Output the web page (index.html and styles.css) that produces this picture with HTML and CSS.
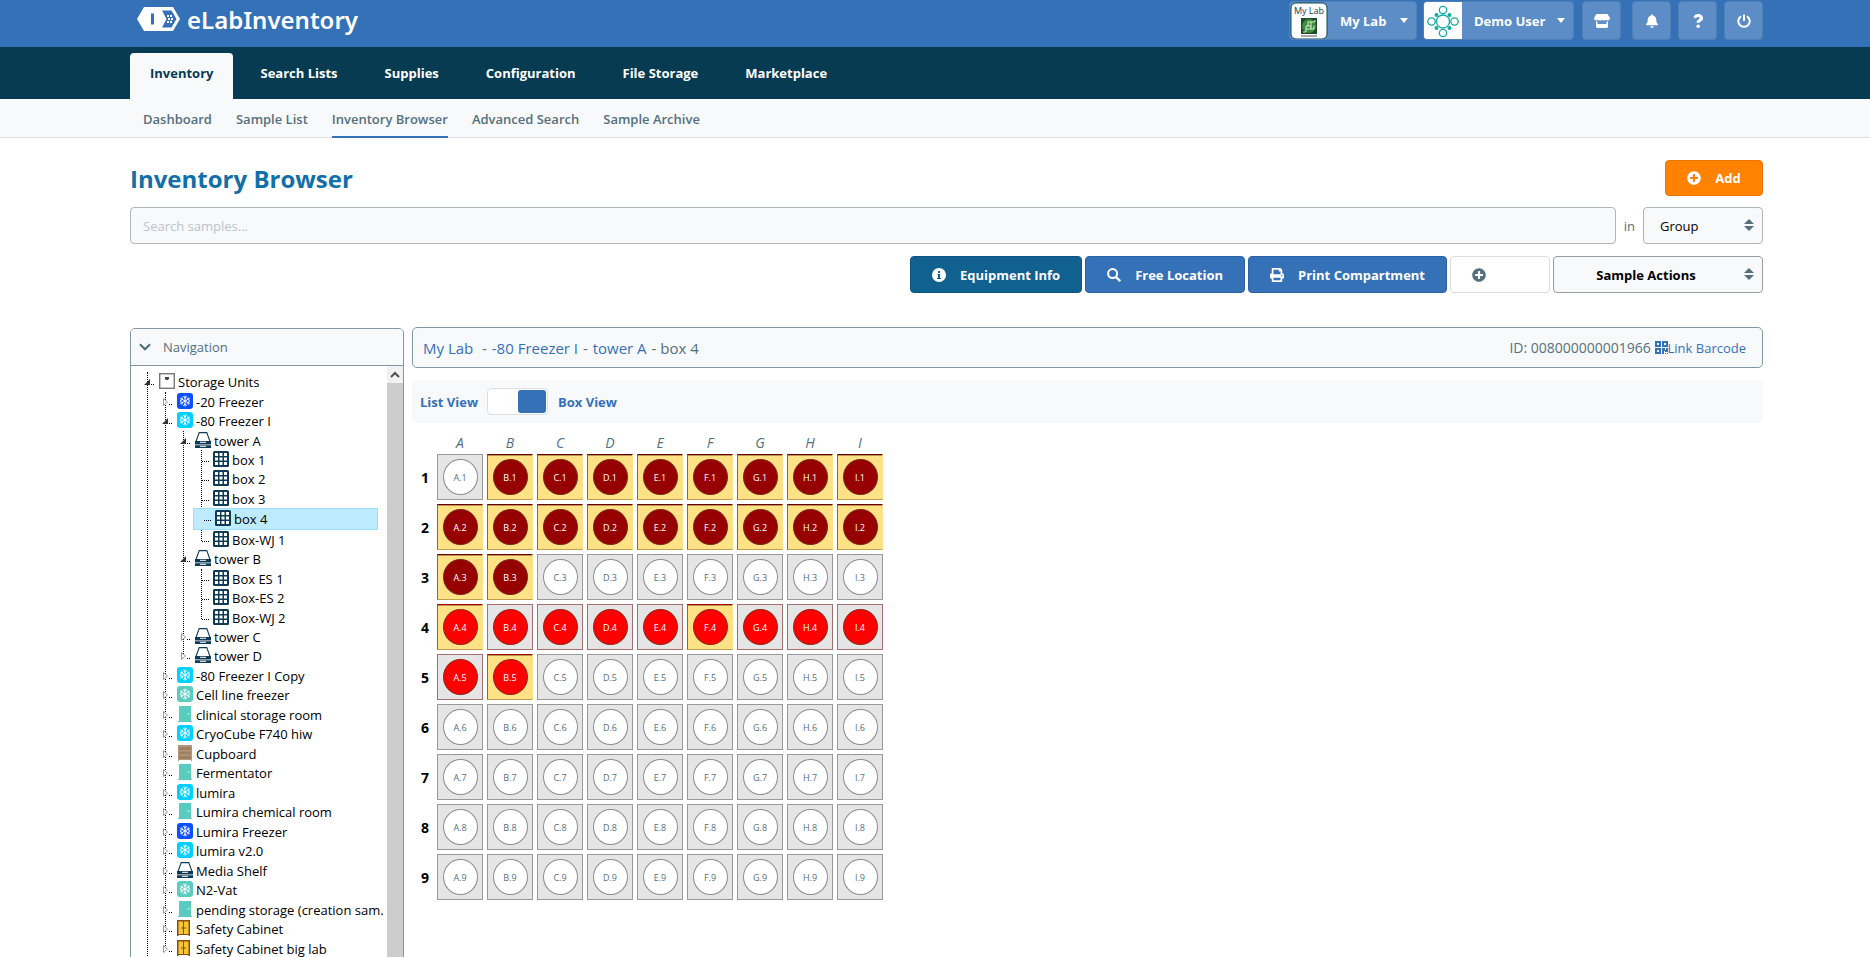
FILE: index.html
```html
<!DOCTYPE html>
<html lang="en">
<head>
  <meta charset="utf-8">
  <meta name="viewport" content="width=device-width, initial-scale=1">
  <title>eLabInventory - Inventory Browser</title>
  <link rel="stylesheet" href="styles.css">
</head>
<body>
<svg class="defs" aria-hidden="true">
  <symbol id="i-flake" viewBox="0 0 16 16"><rect width="16" height="16" rx="3"/><g stroke="#fff" stroke-width="1" fill="none" stroke-linecap="round"><path d="M8 3v10M3.7 5.5l8.6 5M3.7 10.5l8.6-5M6.5 3.6L8 5l1.5-1.4M6.5 12.4L8 11l1.5 1.4M3.4 7.3l2-.6-.5-2M12.6 8.7l-2 .6.5 2M3.4 8.7l2 .6-.5 2M12.6 7.3l-2-.6.5-2"/></g></symbol>
  <symbol id="i-unit" viewBox="0 0 16 16"><rect x=".7" y=".7" width="14.6" height="14.6" fill="#fff" stroke="#777" stroke-width="1.4"/><path d="M6 4h4v2l-1 1H7L6 6z" fill="#444"/></symbol>
  <symbol id="i-tower" viewBox="0 0 16 16"><path d="M4.200 .6h7.600L15 9.500H1z" fill="#fff" stroke="#0f3a55" stroke-width="1.1"/><path d="M0 9h16v3.500H0zM0 13.200h16V16H0z" fill="#0f3a55"/><path d="M5 10.300h6M5 14.300h6" stroke="#fff"/></symbol>
  <symbol id="i-box" viewBox="0 0 16 16"><rect width="16" height="16" rx="1.5" fill="#0f3a55"/><path d="M2 2h3v3H2zM6.500 2h3v3h-3zM11 2h3v3h-3zM2 6.500h3v3H2zM6.500 6.500h3v3h-3zM11 6.500h3v3h-3zM2 11h3v3H2zM6.500 11h3v3h-3zM11 11h3v3h-3z" fill="#fff"/></symbol>
  <symbol id="i-door" viewBox="0 0 16 16"><path d="M2 0h12v15h1v1H1v-1h1z" fill="#58cdbf"/><circle cx="11.500" cy="8" r=".8" fill="#e4fffb"/></symbol>
  <symbol id="i-cupboard" viewBox="0 0 16 16"><path d="M1 0h14v16h-1v-1H2v1H1z" fill="#b5967a"/><path d="M2 2h12v3H2zM2 6.500h12v3H2zM2 11h12v3H2z" fill="#a08062"/></symbol>
  <symbol id="i-cabinet" viewBox="0 0 16 16"><path d="M0 0h13v16h-1.500v-1h-10v1H0z" fill="#8a4a10"/><path d="M1.500 1.500H6V14H1.500zM7 1.500h4.500V14H7z" fill="#f4c534"/><path d="M5 7v2M8 7v2" stroke="#8a4a10"/></symbol>
  <symbol id="i-plus" viewBox="0 0 512 512"><path d="M256 8C119 8 8 119 8 256s111 248 248 248 248-111 248-248S393 8 256 8zm144 276c0 7-5 12-12 12h-92v92c0 7-5 12-12 12h-56c-7 0-12-5-12-12v-92h-92c-7 0-12-5-12-12v-56c0-7 5-12 12-12h92v-92c0-7 5-12 12-12h56c7 0 12 5 12 12v92h92c7 0 12 5 12 12z"/></symbol>
</svg>

<header class="top wrap">
  <a class="logo" href="#">
    <svg width="43" height="24" viewBox="0 0 43 24" aria-hidden="true"><path d="M7 0h29l7 12-7 12H7L0 12z" fill="#fff"/><path d="M25 3.500h9.500l5 8.500-5 8.500H25l4.500-8.500z" fill="#3571b7"/><path d="M14 6.500h3v11h-3z" fill="#3571b7"/><g fill="#fff"><rect x="30" y="8" width="2" height="2"/><rect x="33" y="8" width="2" height="2"/><rect x="31" y="11" width="2" height="2"/><rect x="34" y="11" width="2" height="2"/><rect x="30" y="14" width="2" height="2"/><rect x="33" y="14" width="2" height="2"/></g></svg>
    <span>eLabInventory</span>
  </a>
  <div class="tools">
    <button class="account lab" type="button">
      <svg class="pic" viewBox="0 0 38 38" aria-hidden="true"><rect x="1" y="1" width="36" height="36" rx="5" fill="#fff" stroke="#0c4a4a"/><text x="19" y="12" text-anchor="middle" class="pic-text">My Lab</text><rect x="11" y="16" width="16" height="16" fill="#1c4a2a"/><circle cx="19" cy="24" r="7" fill="#3f8a3d"/><path d="M13 30h3v-3h5v-3h-5v3M21 24v-4h4v-2M18 24v-4h3M21 27h3v-3" stroke="#d8efd8" fill="none"/><path d="M11 33h16v2H11z" fill="#aaa"/></svg>
      <span>My Lab</span><i class="caret"></i>
    </button>
    <button class="account user" type="button">
      <svg class="pic" viewBox="0 0 38 38" aria-hidden="true"><rect width="38" height="38" fill="#fff"/><g fill="none" stroke="#13aaa3" stroke-width="1.300"><circle cx="19" cy="19.500" r="6.500"/><circle cx="19" cy="8" r="3.700"/><circle cx="19" cy="31" r="3.700"/><circle cx="7.500" cy="19.500" r="3.700"/><circle cx="30.500" cy="19.500" r="3.700"/></g><g fill="#13aaa3"><circle cx="12.500" cy="13" r="2"/><circle cx="25.500" cy="13" r="2"/><circle cx="12.500" cy="26" r="2"/><circle cx="25.500" cy="26" r="2"/></g></svg>
      <span>Demo User</span><i class="caret"></i>
    </button>
    <button class="sq shop" type="button" aria-label="Marketplace"><svg width="16" height="14" viewBox="0 0 16 14"><path d="M2.500 0h11L16 4c0 1.500-1 2.400-2 2.400S12 6 12 6s-1 .6-2 .6S8 6 8 6s-1 .6-2 .6S4 6 4 6s-1 .4-2 .4S0 5.500 0 4zM2 7.500h1.500V10h9V7.500H14V13l-1 1H3l-1-1z"/></svg></button>
    <button class="sq bell" type="button" aria-label="Notifications"><svg width="12" height="14" viewBox="0 0 448 512"><path d="M224 512c35 0 64-29 64-64H160c0 35 29 64 64 64zm215-150c-19-21-55-52-55-154 0-78-55-140-128-155V32c0-18-14-32-32-32s-32 14-32 32v21C119 68 64 130 64 208c0 102-36 133-55 154-6 6-9 14-9 22 0 16 13 32 32 32h384c19 0 32-16 32-32 0-8-3-16-9-22z"/></svg></button>
    <button class="sq" type="button" aria-label="Help"><svg width="10" height="14" viewBox="0 0 10 14"><path d="M.3 3C1.300 1 2.800 0 5.200 0 7.800 0 10 1.800 10 4.200c0 3-3.200 3-3.200 4.300v.3H3.600v-.6c0-2.400 3-2.600 3-4 0-.7-.6-1.200-1.500-1.200-1 0-1.600.5-2.300 1.500z"/><circle cx="5.200" cy="12.200" r="1.800"/></svg></button>
    <button class="sq" type="button" aria-label="Log out"><svg width="14" height="14" viewBox="0 0 14 14"><path d="M4 2.300a5.700 5.700 0 1 0 6 0M7 .5v6.500" fill="none" stroke="#fff" stroke-width="2"/></svg></button>
  </div>
</header>

<nav class="main-nav wrap">
  <a class="active" href="#">Inventory</a>
  <a href="#">Search Lists</a>
  <a href="#">Supplies</a>
  <a href="#">Configuration</a>
  <a href="#">File Storage</a>
  <a href="#">Marketplace</a>
</nav>
<nav class="sub-nav wrap">
  <a href="#">Dashboard</a>
  <a href="#">Sample List</a>
  <a class="active" href="#">Inventory Browser</a>
  <a href="#">Advanced Search</a>
  <a href="#">Sample Archive</a>
</nav>

<main class="wrap">
  <div class="title-row">
    <h1>Inventory Browser</h1>
    <button class="btn add" type="button"><svg class="ico" aria-hidden="true"><use href="#i-plus"/></svg>Add</button>
  </div>
  <form class="search">
    <input type="text" placeholder="Search samples..." aria-label="Search samples">
    <label for="scope">in</label>
    <span class="select scope">
      <select id="scope"><option>Group</option></select>
    </span>
  </form>
  <div class="actions">
    <button class="btn info" type="button"><svg class="ico" viewBox="0 0 14 14" aria-hidden="true"><circle cx="7" cy="7" r="7"/><path d="M6 3h2v2H6zM5.500 6H8v4h1v1H5v-1h1V7h-.5z" fill="#10618f"/></svg>Equipment Info</button>
    <button class="btn blue" type="button"><svg class="ico" viewBox="0 0 14 14" aria-hidden="true"><path d="M9 9l4.200 4.200" stroke="#fff" stroke-width="2.400"/><circle cx="5.600" cy="5.600" r="4.500" fill="none" stroke="#fff" stroke-width="2"/></svg>Free Location</button>
    <button class="btn blue" type="button"><svg class="ico" viewBox="0 0 512 512" aria-hidden="true"><path d="M448 192V77c0-8-3-16-9-22L393 9c-6-6-14-9-22-9H96C78 0 64 14 64 32v160c-35 0-64 29-64 64v112c0 9 7 16 16 16h48v96c0 18 14 32 32 32h320c18 0 32-14 32-32v-96h48c9 0 16-7 16-16V256c0-35-29-64-64-64zm-64 256H128v-96h256zm0-224H128V64h192v48c0 9 7 16 16 16h48zm48 72a24 24 0 1 1 0-48 24 24 0 0 1 0 48z"/></svg>Print Compartment</button>
    <button class="btn plain" type="button" aria-label="Add"><svg class="ico" aria-hidden="true"><use href="#i-plus"/></svg></button>
    <span class="select sample-actions">
      <select aria-label="Sample actions"><option>Sample Actions</option></select>
    </span>
  </div>

  <div class="browser">
    <aside class="panel">
      <h2><svg width="12" height="8" viewBox="0 0 12 8" aria-hidden="true"><path d="M1 1.200l5 5 5-5" fill="none" stroke="#54707e" stroke-width="2.200"/></svg>Navigation</h2>
      <div class="panel-body">
        <ul class="tree root">
          <li><div class="row"><i class="tg open"></i><svg><use href="#i-unit"/></svg>Storage Units</div>
            <ul class="tree">
              <li><div class="row"><i class="tg"></i><svg class="deep"><use href="#i-flake"/></svg>-20 Freezer</div></li>
              <li><div class="row"><i class="tg open"></i><svg class="cyan"><use href="#i-flake"/></svg>-80 Freezer I</div>
                <ul class="tree">
                  <li><div class="row"><i class="tg open"></i><svg><use href="#i-tower"/></svg>tower A</div>
                    <ul class="tree">
                      <li><div class="row"><i class="leaf"></i><svg><use href="#i-box"/></svg>box 1</div></li>
                      <li><div class="row"><i class="leaf"></i><svg><use href="#i-box"/></svg>box 2</div></li>
                      <li><div class="row"><i class="leaf"></i><svg><use href="#i-box"/></svg>box 3</div></li>
                      <li><div class="row selected"><i class="leaf"></i><svg><use href="#i-box"/></svg>box 4</div></li>
                      <li><div class="row"><i class="leaf"></i><svg><use href="#i-box"/></svg>Box-WJ 1</div></li>
                    </ul>
                  </li>
                  <li><div class="row"><i class="tg open"></i><svg><use href="#i-tower"/></svg>tower B</div>
                    <ul class="tree">
                      <li><div class="row"><i class="leaf"></i><svg><use href="#i-box"/></svg>Box ES 1</div></li>
                      <li><div class="row"><i class="leaf"></i><svg><use href="#i-box"/></svg>Box-ES 2</div></li>
                      <li><div class="row"><i class="leaf"></i><svg><use href="#i-box"/></svg>Box-WJ 2</div></li>
                    </ul>
                  </li>
                  <li><div class="row"><i class="tg"></i><svg><use href="#i-tower"/></svg>tower C</div></li>
                  <li><div class="row"><i class="tg"></i><svg><use href="#i-tower"/></svg>tower D</div></li>
                </ul>
              </li>
              <li><div class="row"><i class="tg"></i><svg class="cyan"><use href="#i-flake"/></svg>-80 Freezer I Copy</div></li>
              <li><div class="row"><i class="tg"></i><svg class="mint"><use href="#i-flake"/></svg>Cell line freezer</div></li>
              <li><div class="row"><i class="tg"></i><svg><use href="#i-door"/></svg>clinical storage room</div></li>
              <li><div class="row"><i class="tg"></i><svg class="cyan"><use href="#i-flake"/></svg>CryoCube F740 hiw</div></li>
              <li><div class="row"><i class="tg"></i><svg><use href="#i-cupboard"/></svg>Cupboard</div></li>
              <li><div class="row"><i class="tg"></i><svg><use href="#i-door"/></svg>Fermentator</div></li>
              <li><div class="row"><i class="tg"></i><svg class="cyan"><use href="#i-flake"/></svg>lumira</div></li>
              <li><div class="row"><i class="tg"></i><svg><use href="#i-door"/></svg>Lumira chemical room</div></li>
              <li><div class="row"><i class="tg"></i><svg class="deep"><use href="#i-flake"/></svg>Lumira Freezer</div></li>
              <li><div class="row"><i class="tg"></i><svg class="cyan"><use href="#i-flake"/></svg>lumira v2.0</div></li>
              <li><div class="row"><i class="tg"></i><svg><use href="#i-tower"/></svg>Media Shelf</div></li>
              <li><div class="row"><i class="tg"></i><svg class="mint"><use href="#i-flake"/></svg>N2-Vat</div></li>
              <li><div class="row"><i class="tg"></i><svg><use href="#i-door"/></svg>pending storage (creation sam.</div></li>
              <li><div class="row"><i class="tg"></i><svg><use href="#i-cabinet"/></svg>Safety Cabinet</div></li>
              <li><div class="row"><i class="tg"></i><svg><use href="#i-cabinet"/></svg>Safety Cabinet big lab</div></li>
            </ul>
          </li>
        </ul>
        <div class="scroll" aria-hidden="true"><svg width="16" height="17" viewBox="0 0 16 17"><path d="M4 11l4-4 4 4" fill="none" stroke="#505050" stroke-width="2"/></svg></div>
      </div>
    </aside>

    <section class="content">
      <div class="crumbs">
        <div><a href="#">My Lab</a>&nbsp; - <a href="#">-80 Freezer I</a> - <a href="#">tower A</a> - box 4</div>
        <div class="barcode">ID: 008000000001966 <a href="#"><svg width="13" height="13" viewBox="0 0 13 13" aria-hidden="true"><path d="M0 0h6v6H0zM2 2v2h2V2zM7 0h6v6H7zM9 2v2h2V2zM0 7h6v6H0zM2 9v2h2V9zM7 7h3v2h1V7h2v4h-3v-1H9v3H7zM10 12h1v1h-1zM12 12h1v1h-1z" fill-rule="evenodd"/></svg>Link Barcode</a></div>
      </div>
      <label class="view">
        <span>List View</span>
        <input type="checkbox" role="switch" checked>
        <span>Box View</span>
      </label>
      <table class="box" id="box"></table>
    </section>
  </div>
</main>
<script src="box.js"></script>
</body>
</html>
```
FILE: box.js
```javascript
// d = dark, r = red, . = empty; upper case = selected
var rows = [
  '.DDDDDDDD',
  'DDDDDDDDD',
  'DD.......',
  'RrrrrRrrr',
  'rR.......',
  '.........',
  '.........',
  '.........',
  '.........'
];
var cols = 'ABCDEFGHI';
var names = { d: 'dark', r: 'red' };

var html = '<thead><tr><td></td>';
for (var c = 0; c < cols.length; c++) html += '<th scope="col">' + cols[c] + '</th>';
html += '</tr></thead><tbody>';

rows.forEach(function (row, r) {
  html += '<tr><th scope="row">' + (r + 1) + '</th>';
  for (var c = 0; c < row.length; c++) {
    var k = row[c];
    var cls = names[k.toLowerCase()] || 'empty';
    if (/[A-Z]/.test(k)) cls += ' picked';
    html += '<td class="' + cls + '"><span>' + cols[c] + '.' + (r + 1) + '</span></td>';
  }
  html += '</tr>';
});
document.getElementById('box').innerHTML = html + '</tbody>';
```
FILE: styles.css
```css
* { box-sizing: border-box; }
body { margin: 0; height: 100vh; overflow: hidden; background: #fff; color: #54707e; font-family: "Open Sans", "Noto Sans", sans-serif; font-size: 13px; }
a { color: #3571b7; text-decoration: none; }
button, input, select { font-family: inherit; font-size: 13px; }
button { cursor: pointer; }
svg { flex: none; fill: currentColor; }
.defs { position: absolute; width: 0; height: 0; }
.wrap { padding-left: 130px; padding-right: 107px; }

/* header */
.top { display: flex; justify-content: space-between; align-items: flex-start; height: 47px; background: #3571b7; color: #fff; }
.logo { display: flex; align-items: center; gap: 7px; height: 38px; padding-left: 7px; color: #fff; font-family: "Noto Sans", sans-serif; font-size: 24px; font-weight: 600; }
.tools { display: flex; padding-top: 1px; }
.tools button { display: flex; align-items: center; height: 39px; padding: 0; border: 1px solid #5080b5; border-radius: 4px; background: #5d8dc7; color: #fff; font-weight: 700; }
.tools .account { margin-right: 6px; overflow: hidden; }
.tools .user { width: 151px; margin-right: 8px; }
.tools .lab { width: 128px; }
.account .pic { width: 38px; height: 38px; }
.account span { flex: 1; padding-left: 12px; text-align: left; white-space: nowrap; }
.pic-text { font-size: 9px; font-weight: 400; fill: #123f4a; }
.caret { margin-right: 8px; border: 4px solid transparent; border-top: 5px solid #fff; border-bottom: 0; }
.tools .sq { justify-content: center; width: 39px; margin-left: 7px; }
.tools .shop { margin-left: 0; margin-right: 4px; }

.main-nav { display: flex; align-items: flex-end; gap: 7px; height: 52px; background: #073b52; }
.main-nav a { height: 46px; padding: 0 20px; border-radius: 4px 4px 0 0; color: #fff; font-weight: 700; line-height: 40px; }
.main-nav .active { background: #f8f9fb; color: #073b52; }
.sub-nav { display: flex; gap: 24px; height: 39px; border-bottom: 1px solid #dce0e4; background: #f8f9fb; }
.sub-nav a { height: 39px; color: #54707e; font-weight: 600; line-height: 40px; }
.sub-nav a:first-child { margin-left: 13px; }
.sub-nav .active { border-bottom: 2px solid #3571b7; }

/* title, search and buttons */
.title-row { display: flex; justify-content: space-between; align-items: center; margin-top: 22px; height: 36px; }
h1 { margin: 0; color: #136fa8; font-size: 24px; font-weight: 700; }
.btn { display: flex; align-items: center; justify-content: center; gap: 14px; height: 37px; padding: 0 21px; border: 1px solid #2a62a5; border-radius: 4px; background: #3571b7; color: #fff; font-weight: 700; white-space: nowrap; }
.ico { width: 14px; height: 14px; }
.add { width: 98px; height: 36px; border-color: #e87600; background: #ff8200; }
.search { display: flex; align-items: center; gap: 8px; margin-top: 11px; }
.search input { flex: 1; height: 37px; padding: 0 12px; border: 1px solid #b0b5b8; border-radius: 4px; background: #f8f9fb; }
.search input::placeholder { color: #b9c4cc; }
.select { display: flex; position: relative; }
.select select { appearance: none; width: 100%; height: 37px; padding: 0 16px; border: 1px solid #b0b5b8; border-radius: 4px; background: #f8f9fb; color: #000; }
.select::before, .select::after { content: ""; position: absolute; right: 9px; border: 5px solid transparent; pointer-events: none; }
.select::before { top: 12px; border-top: 0; border-bottom-color: #54707e; }
.select::after { top: 19px; border-bottom: 0; border-top-color: #54707e; }
.scope { width: 120px; }
.actions { display: flex; justify-content: flex-end; gap: 3px; margin-top: 12px; }
.info { border-color: #0d5580; background: #10618f; }
.plain { justify-content: flex-start; width: 100px; border-color: #dcdcdc; background: #fff; color: #54707e; }
.sample-actions { width: 210px; }
.sample-actions select { padding: 0 24px 0 0; border-color: #989da0; font-weight: 700; text-align: center; text-align-last: center; }

/* navigation tree */
.browser { display: flex; align-items: flex-start; gap: 8px; margin-top: 34px; }
.panel { width: 274px; flex: none; margin-top: 1px; border: 1px solid #7f98a3; border-radius: 5px; overflow: hidden; }
.panel h2 { display: flex; align-items: center; gap: 12px; margin: 0; height: 37px; padding-left: 8px; border-bottom: 1px solid #7f98a3; background: #f8f9fb; font-size: 13px; font-weight: 400; }
.panel-body { display: flex; color: #000; }
.tree { list-style: none; margin: 0; padding: 0; border-left: 1px dotted #000; }
.root { flex: 1; min-width: 0; margin: 6px 0 40px 16px; }
.tree .tree { display: flow-root; margin: 0 0 8px 17px; }
.tree .tree > li:last-child { margin-bottom: -8px; }
.row { display: flex; align-items: center; height: 20px; white-space: nowrap; }
.tree .tree > li:nth-child(odd) > .row { height: 19px; }
.row svg { width: 16px; height: 16px; margin: 0 3px 2px 0; }
.row i { flex: none; }
.deep { color: #0a50ff; }
.cyan { color: #00d0ff; }
.mint { color: #5accc0; }
.leaf { width: 7px; height: 1px; margin: 3px 4px 0 0; border-top: 1px dotted #000; }
.tg { width: 16px; height: 12px; margin-left: -5px; background: url("data:image/svg+xml,%3Csvg xmlns='http://www.w3.org/2000/svg' width='16' height='12'%3E%3Cpath d='M2.5 2.500v7l4-3.500z' fill='%23fff' stroke='%23999'/%3E%3Cpath d='M8 8h1v1H8zM10 8h1v1h-1z'/%3E%3C/svg%3E"); }
.tg.open { background-image: url("data:image/svg+xml,%3Csvg xmlns='http://www.w3.org/2000/svg' width='16' height='12'%3E%3Cpath d='M7 3v6H1z' fill='%23333'/%3E%3Cpath d='M8 8h1v1H8zM10 8h1v1h-1z'/%3E%3C/svg%3E"); }
.tree .tree .row.selected { height: 22px; margin: 0 9px 0 -9px; padding-left: 10px; border: 1px solid #99defd; background: #beebff; }
.scroll { width: 16px; flex: none; background: #cdcdcd; }
.scroll svg { display: block; background: #f1f1f1; fill: none; }

/* box */
.content { flex: 1; min-width: 0; }
.crumbs { display: flex; justify-content: space-between; align-items: center; height: 41px; padding: 0 16px 0 9px; border: 1px solid #7f98a3; border-radius: 5px; background: #f8f9fb; font-size: 15px; }
.crumbs a { margin: 0 1px; }
.barcode { font-size: 14px; }
.barcode a { margin: 0; font-size: 13px; }
.barcode svg { vertical-align: -1px; }
.view { display: flex; align-items: center; height: 43px; margin-top: 12px; padding-left: 8px; border-radius: 5px; background: #f8f9fb; color: #3571b7; font-weight: 700; line-height: 16px; }
.view input { appearance: none; display: flex; justify-content: flex-end; width: 61px; height: 27px; margin: 0 10px 0 9px; padding: 1px; border: 1px solid #dce0e4; border-radius: 4px; background: #fff; }
.view input::before { content: ""; width: 28px; border-radius: 3px; background: #3571b7; }
.box { width: 474px; margin: 8px 0 0 1px; border-spacing: 4px; table-layout: fixed; }
.box thead td { width: 16px; padding: 0; }
.box th { height: 15px; padding: 0; color: #54707e; font-size: 14px; font-style: italic; font-weight: 400; line-height: 15px; }
.box tbody th { color: #000; font-style: normal; font-weight: 700; }
.box tbody td { height: 46px; padding: 0; border: 1px solid #999; background: #e5e5e5; font-size: 9px; }
.box td span { display: flex; align-items: center; justify-content: center; width: 35px; height: 36px; margin: auto; border: 1px solid #8c8c8c; border-radius: 50%; background: #fff; }
.box .dark span { border-color: #7a2a1a; background: #960000; color: #fff; }
.box .red span { border-color: #8a2a1a; background: #f00; color: #fff; }
.box tbody .red { border-color: #a56e6e; }
.box tbody .picked { border-color: #6a0000 #ffe285 #c0a050 #8a6a3a; background: #ffe285; box-shadow: inset 0 1px #b89450; }
.box tbody .red.picked { border-top-color: #a80000; }
```
